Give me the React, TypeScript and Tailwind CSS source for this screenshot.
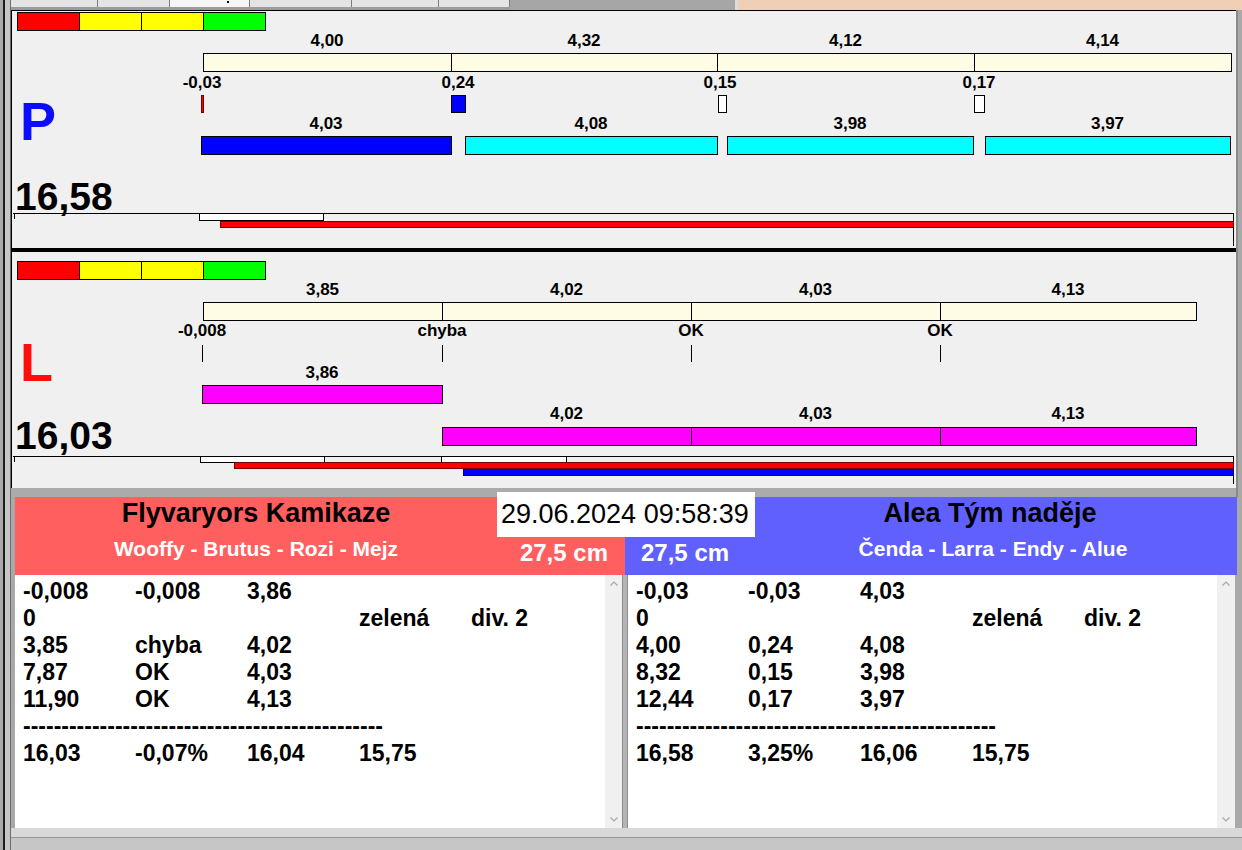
import React from 'react';

type Origin = { x: number; y: number };

const P_ORIGIN: Origin = { x: 12, y: 11 };
const L_ORIGIN: Origin = { x: 12, y: 252 };

function Label({ o, x, y, text }: { o: Origin; x: number; y: number; text: string }) {
    return (
        <div
            className="absolute -translate-x-1/2 whitespace-nowrap text-[17px] font-bold leading-none text-black"
            style={{ left: x - o.x, top: y - o.y }}
        >
            {text}
        </div>
    );
}

function Rect({
    o,
    x1,
    x2,
    y,
    h,
    className,
}: {
    o: Origin;
    x1: number;
    x2: number;
    y: number;
    h: number;
    className: string;
}) {
    return (
        <div
            className={'absolute ' + className}
            style={{ left: x1 - o.x, top: y - o.y, width: x2 - x1 + 1, height: h }}
        />
    );
}

function ColorScale({ o, y }: { o: Origin; y: number }) {
    const cols = ['bg-[#ff0000]', 'bg-[#ffff00]', 'bg-[#ffff00]', 'bg-[#00ff00]'];
    return (
        <>
            {cols.map((c, i) => (
                <Rect key={i} o={o} x1={17 + i * 62} x2={79 + i * 62} y={y} h={19} className={'border border-black ' + c} />
            ))}
        </>
    );
}

function PPanel() {
    const o = P_ORIGIN;
    const cream = [203, 451, 717, 974, 1231];
    const top = ['4,00', '4,32', '4,12', '4,14'];
    const marks = [
        { t: '-0,03', x: 202 },
        { t: '0,24', x: 458 },
        { t: '0,15', x: 720 },
        { t: '0,17', x: 979 },
    ];
    const bars = [
        { x1: 201, x2: 451, t: '4,03', c: 'bg-[#0000ff]' },
        { x1: 465, x2: 717, t: '4,08', c: 'bg-[#00ffff]' },
        { x1: 727, x2: 973, t: '3,98', c: 'bg-[#00ffff]' },
        { x1: 985, x2: 1230, t: '3,97', c: 'bg-[#00ffff]' },
    ];
    return (
        <div className="relative h-[238px] overflow-hidden border-l border-t border-black bg-[#f0f0f0]">
            <ColorScale o={o} y={12} />
            {top.map((t, i) => (
                <Label key={t + i} o={o} x={(cream[i] + cream[i + 1]) / 2} y={32} text={t} />
            ))}
            {top.map((t, i) => (
                <Rect key={'c' + i} o={o} x1={cream[i]} x2={cream[i + 1]} y={53} h={19} className="border border-black bg-[#fffce6]" />
            ))}
            {marks.map((m) => (
                <Label key={m.t} o={o} x={m.x} y={74} text={m.t} />
            ))}
            <Rect o={o} x1={201} x2={203} y={95} h={18} className="border border-[#7a0000] bg-[#ff0000]" />
            <Rect o={o} x1={451} x2={465} y={95} h={18} className="border border-black bg-[#0000ff]" />
            <Rect o={o} x1={718} x2={726} y={95} h={18} className="border border-black bg-white" />
            <Rect o={o} x1={974} x2={984} y={95} h={18} className="border border-black bg-white" />
            {bars.map((b) => (
                <Label key={'l' + b.t} o={o} x={(b.x1 + b.x2) / 2} y={115} text={b.t} />
            ))}
            {bars.map((b) => (
                <Rect key={'b' + b.t} o={o} x1={b.x1} x2={b.x2} y={136} h={19} className={'border border-black ' + b.c} />
            ))}
            <div className="absolute left-[8px] top-[83px] text-[54px] font-bold leading-none text-[#0c0cff]">P</div>
            <div className="absolute left-[3px] top-[166px] text-[39px] font-bold leading-none text-black">16,58</div>
            <Rect o={o} x1={13} x2={1233} y={213} h={1} className="bg-black" />
            <Rect o={o} x1={14} x2={14} y={213} h={6} className="bg-black" />
            <Rect o={o} x1={1233} x2={1233} y={213} h={33} className="bg-black" />
            <Rect o={o} x1={199} x2={323} y={213} h={8} className="border border-black bg-white" />
            <Rect o={o} x1={220} x2={1233} y={221} h={7} className="border border-[#7a0000] bg-[#ff0000]" />
        </div>
    );
}

function LPanel() {
    const o = L_ORIGIN;
    const cream = [203, 442, 691, 940, 1196];
    const top = ['3,85', '4,02', '4,03', '4,13'];
    const marks = ['-0,008', 'chyba', 'OK', 'OK'];
    const lower = ['4,02', '4,03', '4,13'];
    return (
        <div className="relative h-[236px] overflow-hidden border-l border-black bg-[#f0f0f0]">
            <ColorScale o={o} y={261} />
            {top.map((t, i) => (
                <Label key={'t' + i} o={o} x={(cream[i] + cream[i + 1]) / 2} y={281} text={t} />
            ))}
            {top.map((t, i) => (
                <Rect key={'c' + i} o={o} x1={cream[i]} x2={cream[i + 1]} y={302} h={19} className="border border-black bg-[#fffce6]" />
            ))}
            {marks.map((m, i) => (
                <Label key={'m' + i} o={o} x={i === 0 ? 202 : cream[i]} y={322} text={m} />
            ))}
            {[202, 442, 691, 940].map((x) => (
                <Rect key={'k' + x} o={o} x1={x} x2={x} y={345} h={17} className="bg-black" />
            ))}
            <Label o={o} x={322} y={364} text="3,86" />
            <Rect o={o} x1={202} x2={442} y={385} h={19} className="border border-black bg-[#ff00ff]" />
            {lower.map((t, i) => (
                <Label key={'w' + i} o={o} x={(cream[i + 1] + cream[i + 2]) / 2} y={405} text={t} />
            ))}
            {lower.map((t, i) => (
                <Rect key={'g' + i} o={o} x1={cream[i + 1]} x2={cream[i + 2]} y={427} h={19} className="border border-black bg-[#ff00ff]" />
            ))}
            <div className="absolute left-[8px] top-[83px] text-[54px] font-bold leading-none text-[#ff0c0c]">L</div>
            <div className="absolute left-[3px] top-[164px] text-[39px] font-bold leading-none text-black">16,03</div>
            <Rect o={o} x1={13} x2={1233} y={456} h={1} className="bg-black" />
            <Rect o={o} x1={14} x2={14} y={456} h={6} className="bg-black" />
            <Rect o={o} x1={1233} x2={1233} y={456} h={28} className="bg-black" />
            <Rect o={o} x1={200} x2={324} y={456} h={7} className="border border-black bg-white" />
            <Rect o={o} x1={441} x2={566} y={456} h={7} className="border border-black bg-white" />
            <Rect o={o} x1={234} x2={1233} y={462} h={7} className="border border-[#7a0000] bg-[#ff0000]" />
            <Rect o={o} x1={463} x2={1233} y={469} h={7} className="border border-[#000070] bg-[#0000ff]" />
        </div>
    );
}

const DASHES = '-'.repeat(47);

const leftRows = [
    ['-0,008', '-0,008', '3,86', '', ''],
    ['0', '', '', 'zelená', 'div. 2'],
    ['3,85', 'chyba', '4,02', '', ''],
    ['7,87', 'OK', '4,03', '', ''],
    ['11,90', 'OK', '4,13', '', ''],
    [DASHES],
    ['16,03', '-0,07%', '16,04', '15,75', ''],
];

const rightRows = [
    ['-0,03', '-0,03', '4,03', '', ''],
    ['0', '', '', 'zelená', 'div. 2'],
    ['4,00', '0,24', '4,08', '', ''],
    ['8,32', '0,15', '3,98', '', ''],
    ['12,44', '0,17', '3,97', '', ''],
    [DASHES],
    ['16,58', '3,25%', '16,06', '15,75', ''],
];

function Chevron({ up }: { up?: boolean }) {
    return (
        <svg width="8" height="5" viewBox="0 0 8 5">
            <path d={up ? 'M0.5 4.5 L4 1 L7.5 4.5' : 'M0.5 0.5 L4 4 L7.5 0.5'} fill="none" stroke="#a6a6a6" strokeWidth="1.2" />
        </svg>
    );
}

function ListBox({ rows, w }: { rows: string[][]; w: string }) {
    return (
        <div className={'flex flex-col bg-white pl-[8px] pt-[3px] ' + w}>
            {rows.map((r, i) =>
                r.length === 1 ? (
                    <div key={i} className="h-[27px] whitespace-nowrap text-[23px] font-bold leading-[27px] text-black">
                        {r[0]}
                    </div>
                ) : (
                    <div key={i} className="flex h-[27px] text-[23px] font-bold leading-[27px] text-black">
                        {r.map((c, j) => (
                            <div key={j} className="w-[112px] whitespace-nowrap">
                                {c}
                            </div>
                        ))}
                    </div>
                )
            )}
        </div>
    );
}

function ScrollBar({ w }: { w: string }) {
    return (
        <div className={'flex flex-col items-center justify-between bg-[#f0f0f0] pb-[6px] pt-[6px] ' + w}>
            <Chevron up />
            <Chevron />
        </div>
    );
}

export default function App() {
    return (
        <div className="flex h-[850px] w-[1242px] overflow-hidden bg-[#a9a9a9] font-['Liberation_Sans',Arial,sans-serif]">
            {/* window edge */}
            <div className="flex w-[11px]">
                <div className="w-[3px] bg-[#a8a8a8]" />
                <div className="w-[2px] bg-[#1c1c1c]" />
                <div className="w-[5px] bg-[#c6c6c6]" />
                <div className="w-[1px] bg-[#6c6c6c]" />
            </div>

            <div className="flex w-[1231px] flex-col">
                {/* tab strip */}
                <div className="flex h-[10px]">
                    <div className="flex w-[499px] flex-col">
                        <div className="flex h-[7px]">
                            <div className="w-[87px] border-r border-[#7c7c7c] bg-[#e4e4e4]" />
                            <div className="w-[72px] border-r border-[#7c7c7c] bg-[#e4e4e4]" />
                            <div className="relative w-[80px] border-r border-[#7c7c7c] bg-[#f6f6f6]">
                                <div className="absolute left-[57px] top-[1px] h-[2px] w-[2px] bg-black" />
                            </div>
                            <div className="w-[102px] border-r border-[#7c7c7c] bg-[#e4e4e4]" />
                            <div className="w-[87px] border-r border-[#7c7c7c] bg-[#e4e4e4]" />
                            <div className="w-[71px] border-r border-[#7c7c7c] bg-[#e4e4e4]" />
                        </div>
                        <div className="h-[3px] bg-[#9c9c9c]" />
                    </div>
                    <div className="w-[225px] bg-[#a6a6a6]" />
                    <div className="w-[3px] bg-[#dcdcdc]" />
                    <div className="flex-1 bg-[#efd0b6]" />
                </div>

                {/* charts */}
                <div className="flex">
                    <div className="flex w-[1225px] flex-col">
                        <PPanel />
                        <div className="h-[4px] bg-black" />
                        <LPanel />
                        <div className="h-[9px] bg-[#ababab]" />
                    </div>
                    <div className="w-[6px] border-l-2 border-[#8a8a8a] bg-[#a9a9a9]" />
                </div>

                {/* team headers */}
                <div className="relative flex h-[78px]">
                    <div className="w-[4px]" />
                    <div className="flex w-[610px] flex-col bg-[#ff5f5f]">
                        <div className="mt-[3px] w-[482px] text-center text-[27px] font-bold leading-none text-black">
                            Flyvaryors Kamikaze
                        </div>
                        <div className="mt-[11px] flex items-start">
                            <div className="w-[482px] text-center text-[21px] font-bold leading-none text-white">
                                Wooffy - Brutus - Rozi - Mejz
                            </div>
                            <div className="mt-[3px] flex-1 pr-[17px] text-right text-[24px] font-bold leading-none text-white">
                                27,5 cm
                            </div>
                        </div>
                    </div>
                    <div className="flex w-[612px] flex-col bg-[#6060ff]">
                        <div className="mt-[3px] pl-[118px] text-center text-[27px] font-bold leading-none text-black">
                            Alea Tým naděje
                        </div>
                        <div className="mt-[11px] flex items-start">
                            <div className="mt-[3px] w-[130px] pl-[16px] text-[24px] font-bold leading-none text-white">
                                27,5 cm
                            </div>
                            <div className="flex-1 pr-[6px] text-center text-[21px] font-bold leading-none text-white">
                                Čenda - Larra - Endy - Alue
                            </div>
                        </div>
                    </div>
                    <div className="absolute left-[486px] top-[-5px] flex h-[45px] w-[258px] items-center bg-white pl-[4px] text-[27px] leading-none text-black">
                        29.06.2024 09:58:39
                    </div>
                </div>

                {/* result lists */}
                <div className="flex h-[253px]">
                    <div className="w-[4px]" />
                    <ListBox rows={leftRows} w="w-[590px]" />
                    <ScrollBar w="w-[17px]" />
                    <div className="w-[6px] border-x border-[#8c8c8c] bg-[#b4b4b4]" />
                    <ListBox rows={rightRows} w="w-[589px]" />
                    <ScrollBar w="w-[18px]" />
                </div>

                {/* status strip */}
                <div className="flex h-[22px] flex-col">
                    <div className="h-[10px] border-b border-[#969696] bg-[#d8d8d8]" />
                    <div className="flex-1 bg-[#c6c6c6]" />
                </div>
            </div>
        </div>
    );
}
